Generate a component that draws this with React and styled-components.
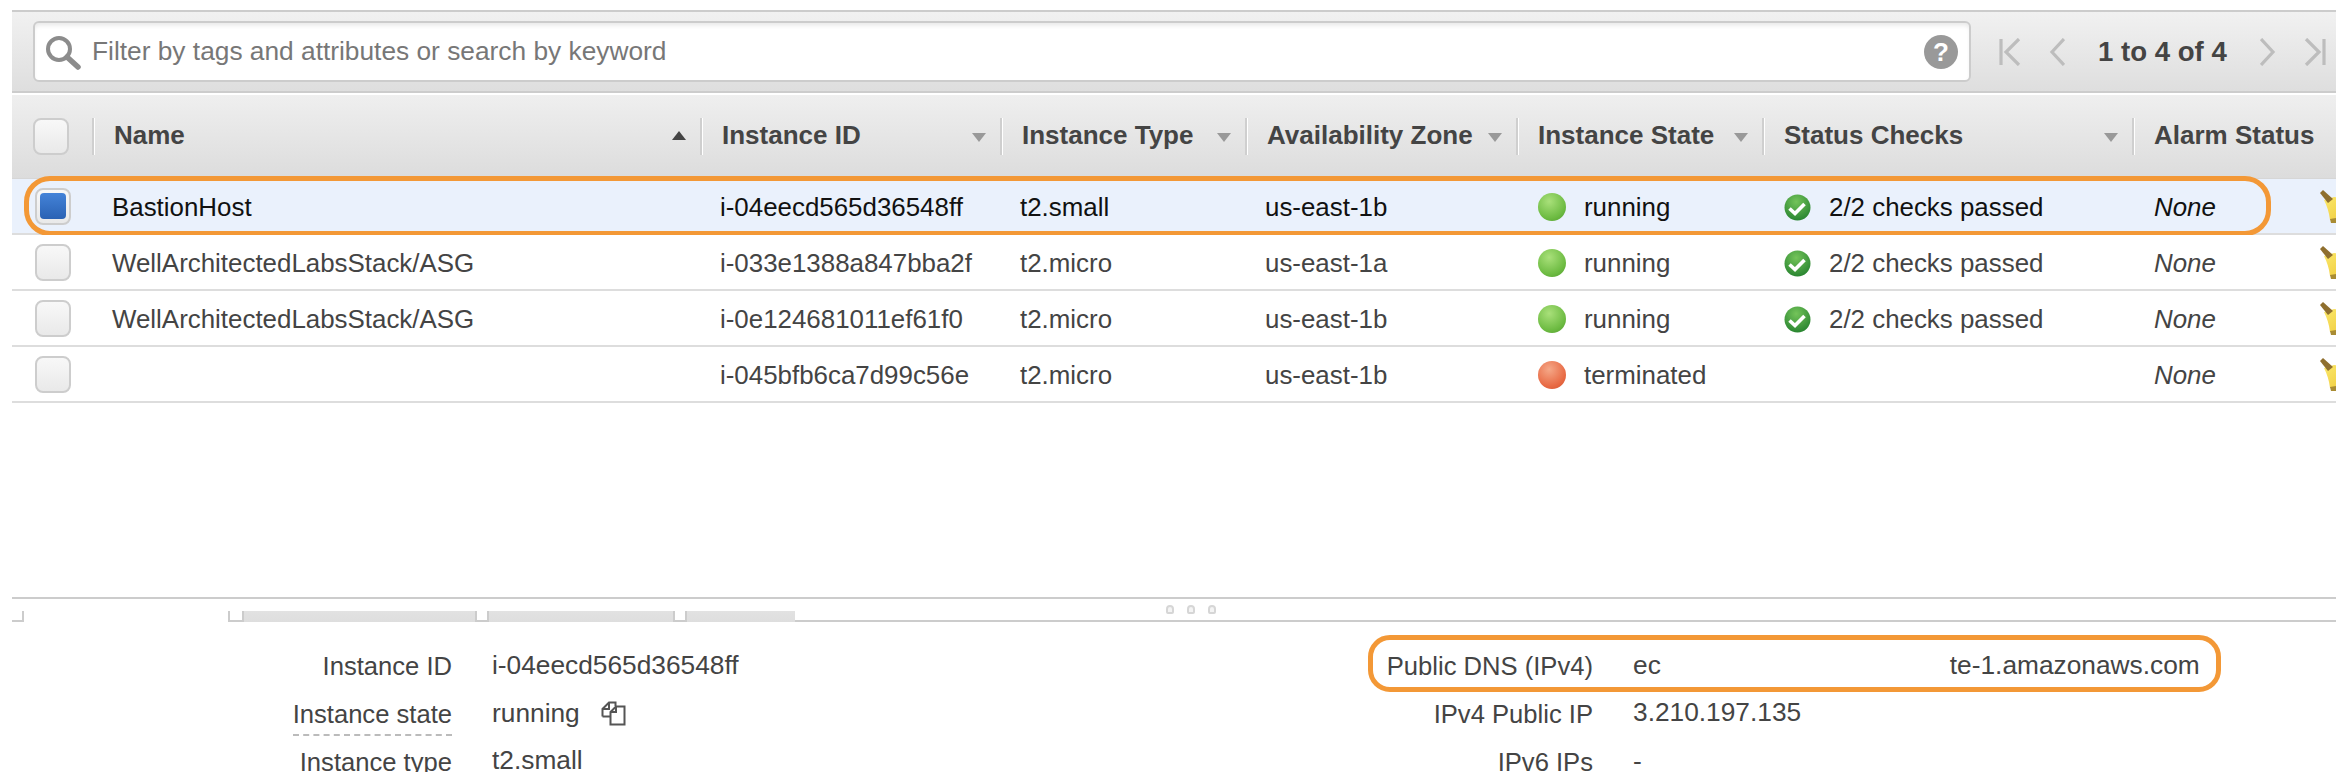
import React from "react";
import styled, { createGlobalStyle } from "styled-components";

const Global = createGlobalStyle`
  html, body { margin: 0; padding: 0; background: #fff; overflow: hidden; }
  body { font-family: "Liberation Sans", Arial, sans-serif; }
`;

const COLUMNS = "80px 608px 300px 245px 271px 246px 370px 166px 1fr";

const Page = styled.div`
  width: 2336px;
  height: 772px;
  overflow: hidden;
  padding: 10px 0 0 12px;
  box-sizing: border-box;
  background: #fff;
`;

const Toolbar = styled.div`
  height: 83px;
  box-sizing: border-box;
  border-top: 2px solid #ccc;
  border-bottom: 2px solid #ccc;
  background: linear-gradient(#f1f1f1, #dedede);
  display: flex;
  align-items: center;
  padding-left: 21px;
`;

const SearchBox = styled.div`
  position: relative;
  width: 1938px;
  height: 61px;
  box-sizing: border-box;
  border: 2px solid #ccc;
  border-radius: 6px;
  background: #fff;
  box-shadow: inset 0 4px 5px -2px rgba(0,0,0,.1);
  display: flex;
  align-items: center;
  padding: 0 11px;
  gap: 10px;
`;

const Placeholder = styled.span`
  flex: 1;
  font-size: 26.3px;
  color: #777;
  white-space: nowrap;
`;

const Help = styled.span`
  width: 34px;
  height: 34px;
  border-radius: 50%;
  background: #999;
  color: #fff;
  font-weight: bold;
  font-size: 26px;
  line-height: 34px;
  text-align: center;
`;

const Pager = styled.div`
  display: flex;
  align-items: center;
  margin-left: 28px;
  gap: 28px;
`;

const PagerText = styled.span`
  font-size: 27.6px;
  font-weight: bold;
  color: #444;
  white-space: nowrap;
  margin: 0 5px;
`;

const Header = styled.div`
  display: grid;
  grid-template-columns: ${COLUMNS};
  height: 84px;
  margin-top: 2px;
  background: linear-gradient(#efefef, #dcdcdc);
  align-items: start;
  padding-top: 23px;
  box-sizing: border-box;
  border-bottom: 1px solid #d6d6d6;
`;

const HeaderCheck = styled.div`
  padding-left: 21px;
`;

const HeaderCell = styled.div`
  height: 37px;
  box-sizing: border-box;
  border-left: 2px solid #cfcfcf;
  box-shadow: inset 1px 0 0 #fff;
  padding: 0 14px 3px 20px;
  display: flex;
  align-items: center;
  justify-content: space-between;
  font-size: 26px;
  font-weight: bold;
  color: #444;
  white-space: nowrap;
`;

const Arrow = styled.span`
  width: 0;
  height: 0;
  border-left: 7px solid transparent;
  border-right: 7px solid transparent;
  ${p => p.$up
    ? "border-bottom: 9px solid #444;"
    : "border-top: 9px solid #999; margin-top: 4px;"}
`;

const Box = styled.span`
  display: flex;
  align-items: center;
  justify-content: center;
  width: 36px;
  height: 37px;
  box-sizing: border-box;
  border: 2px solid #cdcdcd;
  border-radius: 8px;
  background: linear-gradient(#f8f8f8, #e9e9e9);
`;

const BoxFill = styled.span`
  width: 26px;
  height: 26px;
  border-radius: 4px;
  background: linear-gradient(#4483d8, #2a62b4);
`;

const Row = styled.div`
  position: relative;
  display: grid;
  grid-template-columns: ${COLUMNS};
  height: 56px;
  box-sizing: border-box;
  padding-top: 2px;
  border-bottom: 2px solid #ddd;
  align-items: center;
  font-size: 25.9px;
  color: ${p => (p.$selected ? "#111" : "#444")};
  background: ${p => (p.$selected ? "#eaf1fc" : "#fff")};
  white-space: nowrap;
`;

const CheckCell = styled.div`
  padding-left: 23px;
  display: flex;
  margin-top: -2px;
`;

const Cell = styled.div`
  padding-left: 20px;
`;

const StatusCell = styled.div`
  padding-left: 22px;
  display: flex;
  align-items: center;
  gap: 18px;
`;

const AlarmText = styled.div`
  padding-left: 22px;
  font-style: italic;
`;

const Dot = styled.span`
  width: 28px;
  height: 28px;
  flex: none;
  border-radius: 50%;
  background: ${p => p.$red
    ? "radial-gradient(circle at 40% 30%, #f5a888, #e86a44 65%, #d2512c)"
    : "radial-gradient(circle at 40% 30%, #a9e07a, #6dbb42 65%, #4f9a2c)"};
`;

const BellSlot = styled.div`
  padding-left: 22px;
  display: flex;
`;

const Highlight = styled.div`
  position: absolute;
  left: 12px;
  top: -3px;
  width: 2247px;
  height: 60px;
  box-sizing: border-box;
  border: 5px solid #f39836;
  border-radius: 26px;
  pointer-events: none;
`;

const Empty = styled.div`
  height: 194px;
`;

const SplitBar = styled.div`
  position: relative;
  height: 25px;
  box-sizing: border-box;
  border-top: 2px solid #ccc;
  display: flex;
  align-items: flex-end;
`;

const Grip = styled.div`
  position: absolute;
  left: 1154px;
  top: 6px;
  display: flex;
  gap: 13px;
`;

const GripDot = styled.span`
  width: 8px;
  height: 9px;
  box-sizing: border-box;
  border: 2px solid #d6d6d6;
  border-radius: 4px 4px 2px 2px;
  background: #f4f4f4;
`;

const TabEdge = styled.span`
  width: ${p => p.$w}px;
  height: 11px;
  box-sizing: border-box;
  border-bottom: 2px solid #ccc;
  border-right: 2px solid #ccc;
  border-left: ${p => (p.$open ? "2px solid #ccc" : "0")};
`;

const Tab = styled.span`
  width: ${p => p.$w}px;
  height: 11px;
  background: linear-gradient(#e2e2e2, #dedede);
`;

const TabGap = styled.span`
  width: ${p => p.$w}px;
`;

const TabLine = styled.span`
  flex: 1;
  height: 2px;
  background: #ccc;
  border-left: 2px solid #ccc;
`;

const Details = styled.div`
  display: grid;
  grid-template-columns: 1141px 1fr;
  padding-top: 20px;
`;

const DetailColumn = styled.div`
  display: grid;
  grid-template-columns: ${p => p.$label}px 1fr;
  grid-auto-rows: 48px;
  column-gap: 40px;
  font-size: 26.3px;
  color: #444;
  align-items: center;
  white-space: nowrap;
`;

const Label = styled.span`
  position: relative;
  justify-self: end;
  font-size: 25.6px;
`;

const Underline = styled.span`
  position: absolute;
  left: 0;
  right: 0;
  bottom: -7px;
  border-bottom: 2px dashed #bbb;
`;

const Value = styled.span`
  position: relative;
  display: flex;
  align-items: center;
  gap: ${p => p.$gap || 24}px;
  margin-top: ${p => p.$lift ? "-4px" : "-1px"};
`;

const DnsGap = styled.span`
  display: inline-block;
  width: 265px;
`;

const DnsHighlight = styled.span`
  position: absolute;
  left: -265px;
  top: -15px;
  width: 853px;
  height: 57px;
  box-sizing: border-box;
  border: 5px solid #f39836;
  border-radius: 22px;
  pointer-events: none;
`;

const Search = () => (
  <svg width="36" height="37" viewBox="0 0 36 37" fill="none">
    <circle cx="13" cy="16" r="11" stroke="#8c8c8c" strokeWidth="4" fill="#fff" />
    <path d="M21 24 L32 34" stroke="#8c8c8c" strokeWidth="5.5" strokeLinecap="round" />
  </svg>
);

const PagerIcon = ({ d, w }) => (
  <svg width={w} height="28" viewBox={`0 0 ${w} 28`} fill="none" stroke="#bdbdbd" strokeWidth="3.2">
    <path d={d} />
  </svg>
);

const Check = () => (
  <svg width="27" height="27" viewBox="0 0 27 27">
    <defs>
      <radialGradient id="chk" cx="45%" cy="28%" r="78%">
        <stop offset="0%" stopColor="#74c45a" />
        <stop offset="100%" stopColor="#23802d" />
      </radialGradient>
    </defs>
    <circle cx="13.5" cy="13.5" r="13" fill="url(#chk)" />
    <path d="M5.5 14.5 L11 19.5 L20.5 10" fill="none" stroke="#fff" strokeWidth="3.6" />
  </svg>
);

const Bell = () => (
  <svg width="30" height="34" viewBox="0 0 30 34">
    <defs>
      <linearGradient id="bell" x1="0" y1="0" x2="1" y2="1">
        <stop offset="0%" stopColor="#fbe86a" />
        <stop offset="100%" stopColor="#eec83a" />
      </linearGradient>
    </defs>
    <path d="M4 10 L14 7 L30 8 V30 H10 C9 22 7 16 4 10 Z" fill="url(#bell)" />
    <path d="M0 3 L3 0 L13 9 L8 13 Z" fill="#8f6f2e" />
    <path d="M10 29 L16 28 V33 H11 Z" fill="#a98c34" />
  </svg>
);

const Copy = () => (
  <svg width="25" height="25" viewBox="0 0 25 25" fill="none" stroke="#555" strokeWidth="2">
    <path d="M1.5 15.5 V8 L8 1.5 H14.5 V5" />
    <path d="M8 1.5 V8 H1.5" />
    <path d="M1.5 15.5 H9" />
    <path d="M9.5 11 L15 5.5 H23.5 V23.5 H9.5 Z" />
    <path d="M15 5.5 V11 H9.5" />
  </svg>
);

const rows = [
  { name: "BastionHost", id: "i-04eecd565d36548ff", type: "t2.small", zone: "us-east-1b", state: "running", checks: true, selected: true },
  { name: "WellArchitectedLabsStack/ASG", id: "i-033e1388a847bba2f", type: "t2.micro", zone: "us-east-1a", state: "running", checks: true },
  { name: "WellArchitectedLabsStack/ASG", id: "i-0e124681011ef61f0", type: "t2.micro", zone: "us-east-1b", state: "running", checks: true },
  { name: "", id: "i-045bfb6ca7d99c56e", type: "t2.micro", zone: "us-east-1b", state: "terminated", checks: false },
];

const headers = ["Name", "Instance ID", "Instance Type", "Availability Zone", "Instance State", "Status Checks"];

export default function App() {
  return (
    <Page>
      <Global />
      <Toolbar>
        <SearchBox>
          <Search />
          <Placeholder>Filter by tags and attributes or search by keyword</Placeholder>
          <Help>?</Help>
        </SearchBox>
        <Pager>
          <PagerIcon w={22} d="M2 1 V27 M20 1 L7 14 L20 27" />
          <PagerIcon w={16} d="M15 1 L3 14 L15 27" />
          <PagerText>1 to 4 of 4</PagerText>
          <PagerIcon w={16} d="M1 1 L13 14 L1 27" />
          <PagerIcon w={22} d="M20 1 V27 M2 1 L15 14 L2 27" />
        </Pager>
      </Toolbar>
      <Header>
        <HeaderCheck><Box /></HeaderCheck>
        {headers.map((h, i) => (
          <HeaderCell key={h}>
            {h}
            <Arrow $up={i === 0} />
          </HeaderCell>
        ))}
        <HeaderCell>Alarm Status</HeaderCell>
      </Header>
      {rows.map((r, i) => (
        <Row key={i} $selected={r.selected}>
          <CheckCell><Box>{r.selected && <BoxFill />}</Box></CheckCell>
          <Cell>{r.name}</Cell>
          <Cell>{r.id}</Cell>
          <Cell>{r.type}</Cell>
          <Cell>{r.zone}</Cell>
          <StatusCell><Dot $red={r.state !== "running"} />{r.state}</StatusCell>
          <StatusCell>{r.checks && <Check />}{r.checks && "2/2 checks passed"}</StatusCell>
          <AlarmText>None</AlarmText>
          <BellSlot><Bell /></BellSlot>
          {r.selected && <Highlight />}
        </Row>
      ))}
      <Empty />
      <SplitBar>
        <Grip><GripDot /><GripDot /><GripDot /></Grip>
        <TabEdge $w={12} />
        <TabGap $w={204} />
        <TabEdge $w={16} $open />
        <Tab $w={231} />
        <TabEdge $w={14} $open />
        <Tab $w={184} />
        <TabEdge $w={14} $open />
        <Tab $w={108} />
        <TabLine />
      </SplitBar>
      <Details>
        <DetailColumn $label={440}>
          <Label>Instance ID</Label>
          <Value>i-04eecd565d36548ff</Value>
          <Label>Instance state<Underline /></Label>
          <Value $gap={21}>running <Copy /></Value>
          <Label>Instance type</Label>
          <Value $lift>t2.small</Value>
        </DetailColumn>
        <DetailColumn $label={440}>
          <Label>Public DNS (IPv4)</Label>
          <Value>
            <span>ec<DnsGap /></span>
            <span>te-1.amazonaws.com</span>
            <DnsHighlight />
          </Value>
          <Label>IPv4 Public IP</Label>
          <Value $lift>3.210.197.135</Value>
          <Label>IPv6 IPs</Label>
          <Value>-</Value>
        </DetailColumn>
      </Details>
    </Page>
  );
}
